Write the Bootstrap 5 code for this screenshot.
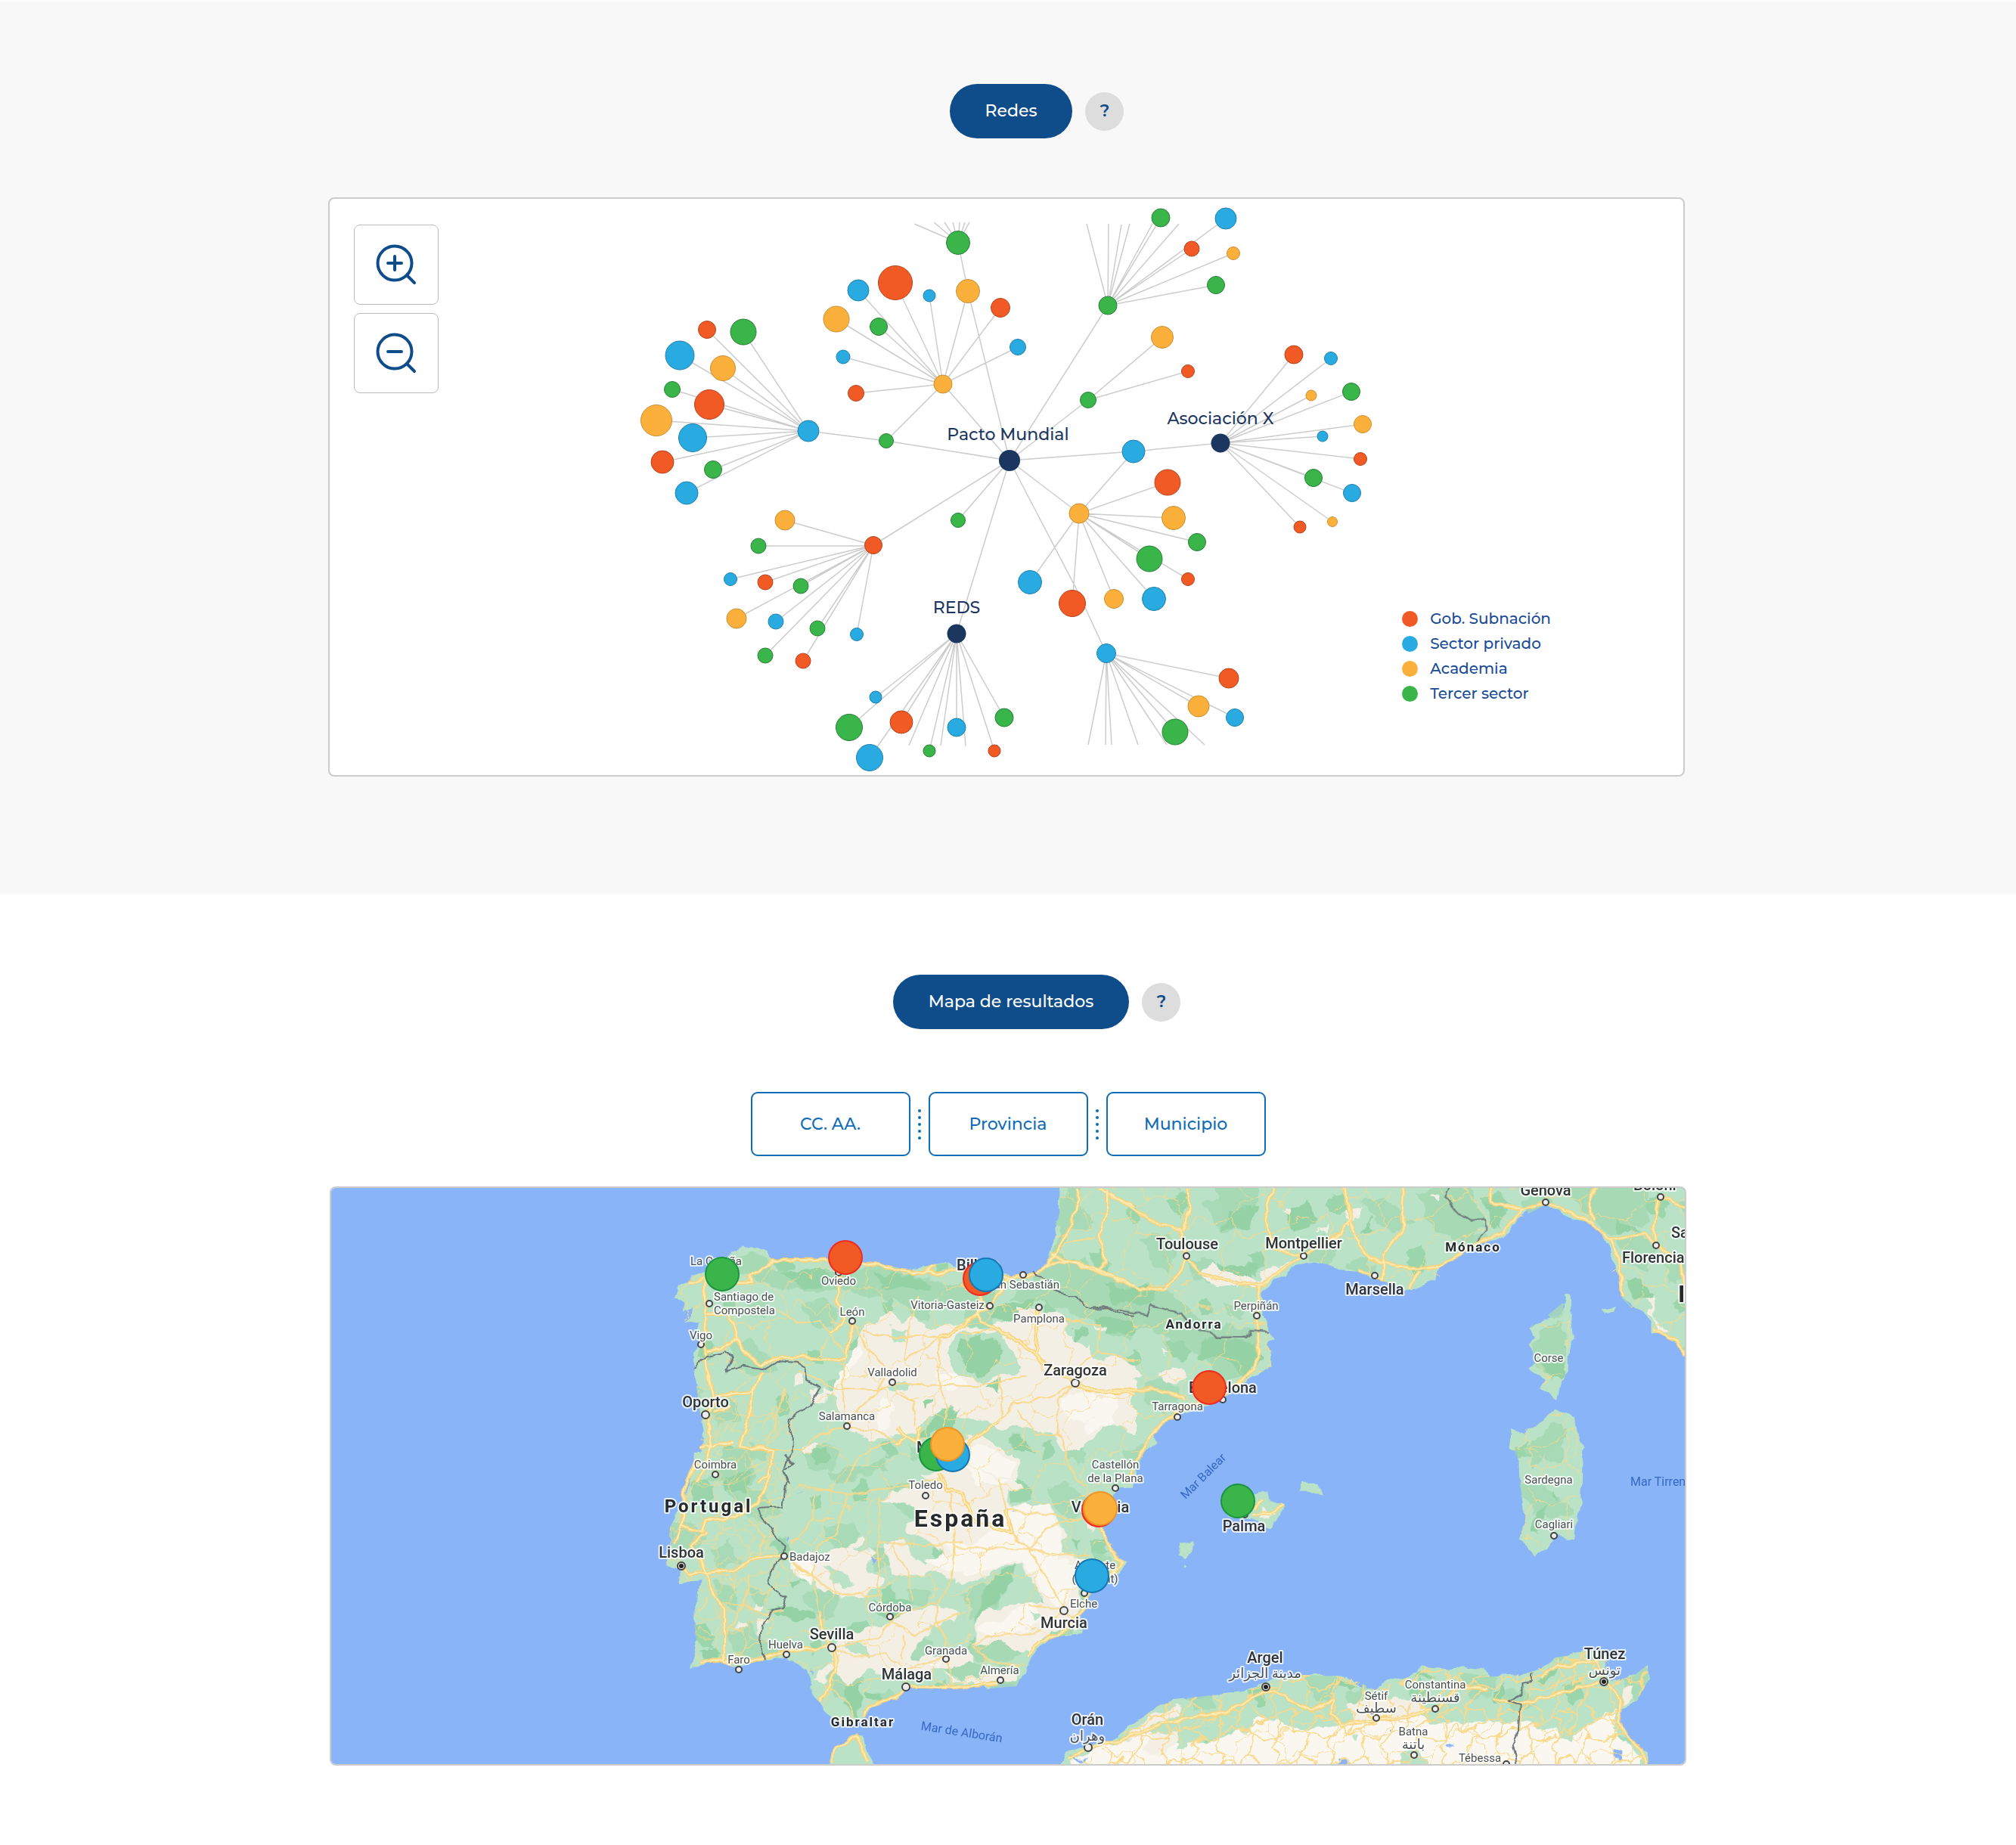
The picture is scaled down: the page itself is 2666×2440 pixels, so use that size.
<!DOCTYPE html>
<html lang="es">
<head>
<meta charset="utf-8">
<meta name="viewport" content="width=device-width, initial-scale=1">
<title>Redes y mapa de resultados</title>
<link href="https://cdn.jsdelivr.net/npm/bootstrap@5.3.0/dist/css/bootstrap.min.css" rel="stylesheet">
<style>
body{font-family:Montserrat,Inter,"Open Sans",sans-serif;font-size:22px;font-weight:500;background:#fff}
.zone-net{background:#f8f8f8;border-top:2px solid #fff;padding-top:109px;padding-bottom:155px}
.zone-map{padding-top:107px;padding-bottom:105px}
.panel-wrap{max-width:1794px;margin:0 auto}
.title-row{gap:17px;padding-left:76px}
.pill-title{background:#0f4c8a;color:#fff;font-size:22px;line-height:32px;padding:20px 47px;border:0;font-weight:500}
.pill-title:hover{background:#0c3f73;color:#fff}
.help-btn{width:51px;height:51px;background:#ddd;color:#0f4c8a;font-size:22px;line-height:26px;font-weight:600;padding:0;border:0}
.panel{border:2px solid #ccc;border-radius:8px;background:#fff;overflow:hidden}
.net-panel{margin-top:78px}
.map-panel{margin-top:40px}
.panel svg.canvas{display:block;width:100%;height:auto}
.zoom-tools{position:absolute;left:32px;top:34px;gap:11px}
.zoom-tools .btn{width:112px;height:106px;border:1px solid #bbb;border-radius:8px;background:#fff;padding:0}
.legend{position:absolute;right:175px;bottom:91px;margin:0;color:#1a4b96;font-size:20px;line-height:33px}
.legend li{display:flex;align-items:center;gap:16px}
.legend i{width:21px;height:21px;border-radius:50%}
.bg-gob{background:#f15a24}.bg-priv{background:#29abe2}.bg-acad{background:#fbb03b}.bg-ter{background:#39b54a}
.filters{gap:12px;margin-top:83px}
.filters .btn{width:211px;height:85px;border:2px solid #0f6cb6;border-radius:9px;color:#0f6cb6;background:#fff;font-size:22px;font-weight:500}
.dots{display:flex;flex-direction:column;gap:5px;width:0;align-items:center}
.dots span{width:4px;height:4px;border-radius:50%;background:#0f6cb6;flex:none}
.edges{fill:none;stroke:#ccc;stroke-width:1.5}
.red{fill:#f15a24;stroke:#b8421a}.blue{fill:#29abe2;stroke:#1e80ac}.orange{fill:#fbb03b;stroke:#cc8d2d}.green{fill:#39b54a;stroke:#277f34}
.navy{fill:#1b365f}
.hub-names{fill:#1b365f;font-size:22px;text-anchor:middle}
.land{fill:#b9e2c6}.sand{fill:#f4efe4}.pale{fill:#faf7f1}.wood{fill:#94d2a5}.mid{fill:#a6d9b4}
.road{fill:none;stroke-linejoin:round;vector-effect:non-scaling-stroke}
.r1{stroke:#f8d27a;stroke-width:5}.r2{stroke:#fdebb4;stroke-width:2}
.thin{fill:none;stroke:#f9d98c;stroke-width:2;stroke-linejoin:round}
.border-line{fill:none;stroke:#6c777b;stroke-width:2;vector-effect:non-scaling-stroke;stroke-linejoin:round}
.towns{fill:#eee;stroke:#444;stroke-width:2}
.lb{font-family:Roboto,"DejaVu Sans",sans-serif;text-anchor:middle;paint-order:stroke;stroke:#fff;stroke-opacity:.8;stroke-width:4px;stroke-linejoin:round;fill:#4a4f52;font-size:15px;font-weight:400}
.lb .s{text-anchor:start}.lb .e{text-anchor:end}
.lb .ar{font-size:18px}
.city{font-size:20px;font-weight:500;fill:#303436}
.nation{font-weight:700;fill:#26292b;font-size:17px;letter-spacing:2px}
.nation .xl{font-size:32px;letter-spacing:3px}.nation .l{font-size:24px;letter-spacing:3px}
.sea{fill:#3668c4;stroke:none;font-size:16px}
.pins{stroke-width:2}
.pins .red{stroke:#f22a22}.pins .blue{stroke:#1577b5}.pins .orange{stroke:#f29423}.pins .green{stroke:#1d9440}
</style>
</head>
<body>
<main>
<section class="zone-net">
 <div class="title-row d-flex justify-content-center align-items-center">
  <button type="button" class="btn rounded-pill pill-title">Redes</button>
  <button type="button" class="btn rounded-circle help-btn" aria-label="Ayuda sobre redes">?</button>
 </div>
 <div class="pe-1">
 <div class="panel-wrap">
 <div class="panel net-panel position-relative">
  <svg class="canvas" viewBox="436 263 1790 762" role="img" aria-label="Red de entidades">
   <path class="edges" d="M1069 570L935 436M1069 570L983 439M1069 570L899 470M1069 570L956 487M1069 570L889 515M1069 570L938 535M1069 570L868 556M1069 570L916 579M1069 570L876 611M1069 570L943 621M1069 570L908 652M1069 570L1172 583L1335 609M1247 508L1172 583M1247 508L1335 609M1247 508L1135 384M1247 508L1184 374M1247 508L1229 391M1247 508L1280 385M1247 508L1323 407M1247 508L1106 422M1247 508L1162 432M1247 508L1115 472M1247 508L1346 459M1247 508L1132 520M1335 609L1280 385L1267 321M1267 321L1209 296M1267 321L1235 294M1267 321L1249 294M1267 321L1260 294M1267 321L1269 294M1267 321L1276 294M1267 321L1282 294
   M1335 609L1465 404M1465 404L1437 296M1465 404L1466 296M1465 404L1483 297M1465 404L1494 296M1465 404L1524 296M1465 404L1535 288M1465 404L1559 296M1465 404L1621 289M1465 404L1576 329M1465 404L1631 335M1465 404L1608 377M1335 609L1439 529L1537 446M1439 529L1571 491M1335 609L1499 597L1614 586M1499 597L1427 679
   M1614 586L1711 469M1614 586L1760 474M1614 586L1734 523M1614 586L1787 518M1614 586L1802 561M1614 586L1749 577M1614 586L1799 607M1614 586L1737 632M1614 586L1788 652M1614 586L1719 697M1614 586L1762 690
   M1335 609L1427 679M1427 679L1544 638M1427 679L1552 685M1427 679L1583 717M1427 679L1520 739M1427 679L1571 766M1427 679L1362 770M1427 679L1418 798M1427 679L1473 792M1427 679L1526 792M1335 609L1424 780L1463 864
   M1463 864L1625 897M1463 864L1585 934M1463 864L1633 949M1463 864L1554 968M1463 864L1439 985M1463 864L1462 985M1463 864L1470 985M1463 864L1505 985M1463 864L1543 985M1463 864L1593 985
   M1335 609L1267 688M1335 609L1155 721M1335 609L1265 838M1155 721L1038 688M1155 722L1003 722M1155 721L966 766M1155 721L1012 770M1155 721L1059 775M1155 721L974 818M1155 721L1026 822M1155 721L1081 831M1155 721L1133 839M1155 721L1012 867M1155 721L1062 874
   M1265 838L1158 922M1265 838L1123 962M1265 838L1192 955M1265 838L1150 1002M1265 838L1202 986M1265 838L1229 993M1265 838L1244 986M1265 838L1265 962M1265 838L1277 987M1265 838L1315 993M1265 838L1328 949"/>
   <g class="red"><circle cx="935" cy="436" r="11.5"/><circle cx="938" cy="535" r="19.5"/><circle cx="876" cy="611" r="15"/><circle cx="1184" cy="374" r="22.5"/><circle cx="1323" cy="407" r="12.5"/><circle cx="1132" cy="520" r="10.5"/><circle cx="1576" cy="329" r="10"/><circle cx="1571" cy="491" r="8.5"/><circle cx="1711" cy="469" r="12"/><circle cx="1799" cy="607" r="8.5"/><circle cx="1719" cy="697" r="8"/><circle cx="1544" cy="638" r="17"/><circle cx="1571" cy="766" r="8.5"/><circle cx="1418" cy="798" r="17.5"/><circle cx="1625" cy="897" r="13"/><circle cx="1315" cy="993" r="8"/><circle cx="1155" cy="721" r="11.5"/><circle cx="1012" cy="770" r="10"/><circle cx="1062" cy="874" r="10"/><circle cx="1192" cy="955" r="15"/></g>
   <g class="blue"><circle cx="1069" cy="570" r="14"/><circle cx="899" cy="470" r="19"/><circle cx="916" cy="579" r="18.5"/><circle cx="908" cy="652" r="15"/><circle cx="1135" cy="384" r="14"/><circle cx="1229" cy="391" r="8"/><circle cx="1115" cy="472" r="9"/><circle cx="1346" cy="459" r="10.5"/><circle cx="1621" cy="289" r="14"/><circle cx="1499" cy="597" r="15"/><circle cx="1760" cy="474" r="8.5"/><circle cx="1749" cy="577" r="7"/><circle cx="1788" cy="652" r="11.5"/><circle cx="1362" cy="770" r="15.5"/><circle cx="1526" cy="792" r="15.5"/><circle cx="1463" cy="864" r="12.5"/><circle cx="1633" cy="949" r="11.5"/><circle cx="966" cy="766" r="8.5"/><circle cx="1026" cy="822" r="10"/><circle cx="1133" cy="839" r="8.5"/><circle cx="1158" cy="922" r="8"/><circle cx="1150" cy="1002" r="17.5"/><circle cx="1265" cy="962" r="12"/></g>
   <g class="orange"><circle cx="956" cy="487" r="16.5"/><circle cx="868" cy="556" r="20.5"/><circle cx="1247" cy="508" r="12"/><circle cx="1280" cy="385" r="15.5"/><circle cx="1106" cy="422" r="17"/><circle cx="1631" cy="335" r="8.5"/><circle cx="1537" cy="446" r="14.5"/><circle cx="1734" cy="523" r="7"/><circle cx="1802" cy="561" r="11.5"/><circle cx="1762" cy="690" r="6.5"/><circle cx="1427" cy="679" r="13"/><circle cx="1552" cy="685" r="15.5"/><circle cx="1473" cy="792" r="12.5"/><circle cx="1585" cy="934" r="14"/><circle cx="1038" cy="688" r="13"/><circle cx="974" cy="818" r="13"/></g>
   <g class="green"><circle cx="983" cy="439" r="17"/><circle cx="889" cy="515" r="10.5"/><circle cx="943" cy="621" r="11.5"/><circle cx="1172" cy="583" r="9.5"/><circle cx="1162" cy="432" r="11.5"/><circle cx="1267" cy="321" r="15.5"/><circle cx="1465" cy="404" r="12"/><circle cx="1535" cy="288" r="12"/><circle cx="1608" cy="377" r="11.5"/><circle cx="1439" cy="529" r="10.5"/><circle cx="1787" cy="518" r="11.5"/><circle cx="1737" cy="632" r="11.5"/><circle cx="1583" cy="717" r="11.5"/><circle cx="1520" cy="739" r="17"/><circle cx="1554" cy="968" r="17"/><circle cx="1328" cy="949" r="12"/><circle cx="1003" cy="722" r="10"/><circle cx="1059" cy="775" r="10"/><circle cx="1081" cy="831" r="10"/><circle cx="1012" cy="867" r="10"/><circle cx="1267" cy="688" r="9.5"/><circle cx="1123" cy="962" r="17.5"/><circle cx="1229" cy="993" r="8"/></g>
   <g class="navy"><circle cx="1335" cy="609" r="14"/><circle cx="1614" cy="586" r="12.5"/><circle cx="1265" cy="838" r="12.5"/></g>
   <g class="hub-names"><text x="1333" y="582">Pacto Mundial</text><text x="1614" y="561">Asociación X</text><text x="1265" y="811">REDS</text></g>
  </svg>
  <div class="zoom-tools d-flex flex-column">
   <button type="button" class="btn" aria-label="Acercar"><svg width="56" height="56" viewBox="0 0 56 56" fill="none" stroke="#0f4c8a" stroke-width="4" stroke-linecap="round"><circle cx="26" cy="26" r="22.500"/><path d="M42 42L52 52M17 26H35M26 17V35"/></svg></button>
   <button type="button" class="btn" aria-label="Alejar"><svg width="56" height="56" viewBox="0 0 56 56" fill="none" stroke="#0f4c8a" stroke-width="4" stroke-linecap="round"><circle cx="26" cy="26" r="22.500"/><path d="M42 42L52 52M17 26H35"/></svg></button>
  </div>
  <ul class="legend list-unstyled">
   <li><i class="bg-gob"></i>Gob. Subnación</li><li><i class="bg-priv"></i>Sector privado</li><li><i class="bg-acad"></i>Academia</li><li><i class="bg-ter"></i>Tercer sector</li>
  </ul>
 </div>
 </div>
 </div>
</section>

<section class="zone-map">
 <div class="title-row d-flex justify-content-center align-items-center">
  <button type="button" class="btn rounded-pill pill-title">Mapa de resultados</button>
  <button type="button" class="btn rounded-circle help-btn" aria-label="Ayuda sobre el mapa">?</button>
 </div>
 <div class="filters d-flex justify-content-center align-items-center">
  <button type="button" class="btn">CC. AA.</button>
  <div class="dots"><span></span><span></span><span></span><span></span><span></span></div>
  <button type="button" class="btn">Provincia</button>
  <div class="dots"><span></span><span></span><span></span><span></span><span></span></div>
  <button type="button" class="btn">Municipio</button>
 </div>
 <div class="panel-wrap">
 <div class="panel map-panel">
  <svg class="canvas" viewBox="438 1571 1790 762" role="img" aria-label="Mapa de resultados">
   <defs>
    <filter id="rough" filterUnits="userSpaceOnUse" x="840" y="1540" width="1420" height="820" color-interpolation-filters="sRGB">
     <feTurbulence type="fractalNoise" baseFrequency=".045" numOctaves="3" seed="4" result="n"/>
     <feDisplacementMap in="SourceGraphic" in2="n" scale="20" xChannelSelector="R" yChannelSelector="G"/>
    </filter>
    <filter id="roughSoft" filterUnits="userSpaceOnUse" x="840" y="1540" width="1420" height="820" color-interpolation-filters="sRGB">
     <feTurbulence type="fractalNoise" baseFrequency=".06" numOctaves="2" seed="9" result="n"/>
     <feDisplacementMap in="SourceGraphic" in2="n" scale="9" xChannelSelector="R" yChannelSelector="G"/>
    </filter>
    <g id="coast">
     <g transform="translate(860 1560) scale(.40816 .33333)">
      <path d="M1328 -40L1325 130L1305 250L1285 335L1240 375L1190 385L1150 375L1100 365L1050 355L1000 348L960 330L900 345L840 358L760 345L690 325L630 312L560 315L480 318L395 315L375 285L350 270L320 275L300 262L250 300L235 330L180 365L135 380L125 410L95 415L78 470L110 490L105 520L140 510L110 570L160 560L150 620L165 655L140 690L140 750L155 850L165 930L175 1000L165 1080L150 1150L140 1220H1540L1568 1120V-40Z"/>
     </g>
     <g transform="translate(1380 1560) scale(.54847 .33333)">
      <path d="M100 -40H1600V735L1545 700L1530 650L1480 605L1465 612L1465 560L1440 520L1395 470L1395 400L1370 320L1365 260L1340 205L1320 175L1270 150L1212 100L1170 120L1140 160L1125 210L1090 240L1050 250L1000 300L950 350L945 400L900 430L870 435L830 405L790 395L760 365L710 360L700 345L650 325L600 350L585 380L560 395L525 440L530 540L555 640L540 650L550 740L520 770L480 810L430 870L380 905L330 930L280 975L265 1010L275 1040L240 1080L215 1220H100Z"/>
      <path d="M1257 458L1270 460L1272 540L1280 620L1265 700L1265 760L1250 800L1240 870L1195 825L1205 800L1175 750L1190 720L1168 650L1185 630L1175 590L1200 560L1250 530ZM1345 515L1380 505L1375 525L1350 528ZM1235 908L1280 950L1285 1000L1305 1060L1295 1140L1290 1220H1148L1145 1080L1122 1070L1128 990L1160 1010L1210 950Z"/>
     </g>
     <g transform="translate(860 1930) scale(.40816 .33333)">
      <path d="M145 -30L130 100L95 200L65 270L75 300L50 420L100 440L90 490L160 480L155 560L140 610L150 650L150 740L130 828L200 800L240 810L290 830L340 800L440 785L500 830L525 880L520 910L545 960L570 1010L620 1050L650 1065L690 1020L710 985L760 950L800 945L830 905L900 895L980 905L1060 890L1095 910L1135 880L1185 900L1215 850L1235 780L1300 705L1400 690L1390 640L1410 560L1440 500L1520 450L1545 410L1500 370L1470 290L1450 240L1480 170L1520 110L1540 50L1560 -30ZM570 1260L595 1140L630 1115L660 1095L690 1100L700 1160L750 1260Z"/>
     </g>
     <g transform="translate(1380 1930) scale(.54847 .33333)">
      <path d="M440 220L460 170L520 130L540 130L545 165L578 180L570 230L545 275L510 240L480 235ZM622 95L660 95L677 150L640 125L622 125ZM322 380L335 335L362 328L358 360L340 390ZM338 420L347 430L340 440ZM1300 -30L1297 150L1285 240L1280 320L1235 300L1215 350L1185 383L1150 320L1160 250L1150 100L1146 -30Z"/>
      <path d="M30 1260L55 1160L90 1140L170 1115L205 1060L250 1010L310 955L400 940L480 920L540 880L620 855L730 860L770 910L800 915L830 880L900 850L910 820L940 825L980 840L1010 820L1060 835L1080 860L1170 850L1210 820L1240 785L1310 755L1360 775L1355 830L1370 880L1420 860L1455 820L1460 870L1430 960L1395 990L1385 1050L1410 1110L1455 1160L1452 1260Z"/>
     </g>
    </g>
    <clipPath id="landClip">
     <path d="M1402 1540L1401 1603L1393 1643L1384 1672L1366 1685L1346 1688L1309 1682L1268 1676L1252 1670L1203 1679L1142 1668L1021 1665L1003 1650L982 1647L962 1660L915 1687L892 1717L905 1727L905 1750L925 1747L927 1778L917 1810L927 1870L927 1920L913 1963L899 1997L886 2020L880 2070L901 2077L897 2093L925 2090L917 2133L921 2177L913 2206L942 2197L978 2207L999 2197L1040 2192L1064 2207L1082 2250L1113 2280L1125 2285L1150 2258L1186 2245L1199 2232L1260 2232L1307 2233L1344 2230L1364 2190L1391 2165L1431 2160L1431 2130L1448 2097L1490 2067L1460 2027L1452 2010L1475 1970L1498 1960L1512 1920L1531 1900L1534 1885L1561 1870L1616 1850L1682 1807L1681 1773L1671 1740L1668 1707L1709 1677L1737 1668L1797 1682L1857 1705L1898 1693L1956 1643L2005 1613L2045 1593L2104 1618L2145 1717L2185 1757L2250 1800V1540ZM1399 2350L1473 2302L1517 2267L1550 2248L1643 2237L1720 2215L1780 2217L1819 2235L1874 2213L1879 2203L1917 2210L1972 2217L2022 2213L2060 2192L2098 2182L2126 2188L2131 2223L2159 2217L2178 2203L2181 2220L2164 2250L2145 2260L2140 2280L2178 2317V2350ZM2058 1864L2084 1880L2095 1915L2088 1955L2080 2030L2050 2035L2030 2050L2012 2030L2010 1955L2000 1910L2010 1895ZM2070 1720L2080 1760L2060 1845L2036 1830L2025 1775L2040 1745Z"/>
    </clipPath>
    <pattern id="localRoads" width="132" height="118" patternUnits="userSpaceOnUse">
     <path class="thin" d="M0 30L18 36L30 24L52 30L66 52L90 46L108 58L132 30M30 24L36 0M36 118L48 98L44 76L66 52M44 76L20 82L0 72M90 46L96 20L88 0M88 118L96 96L120 90L132 72M108 58L120 90M48 98L70 104L96 96" style="stroke-width:1"/>
    </pattern>
    <pattern id="denseRoads" width="74" height="66" patternUnits="userSpaceOnUse">
     <path class="thin" d="M0 16L12 22L20 10L34 18L42 32L58 26L74 16M20 10L26 0M26 66L30 52L22 42L42 32M22 42L8 48L0 40M58 26L62 10L54 0M54 66L62 52L74 40M58 26L66 36L62 52M30 52L46 56L62 52M12 22L8 48"/>
    </pattern>
    <pattern id="woods" width="210" height="190" patternUnits="userSpaceOnUse">
     <path class="mid" d="M10 20L40 8L62 24L52 48L24 44ZM120 70L150 60L172 78L190 100L160 108L136 96ZM40 120L72 110L90 130L76 160L52 150ZM150 10L180 16L174 34L154 30ZM100 150L128 140L140 168L110 176Z"/>
     <path class="wood" d="M70 66L92 56L106 72L96 90L80 84ZM180 140L200 130L206 156L190 166ZM20 80L34 76L38 92L26 98ZM116 12L128 6L134 24L120 30Z"/>
    </pattern>
    <g id="mainRoads">
    <g transform="translate(860 1560) scale(.40816 .33333)">
     <path class="road" d="M120 415L180 385L175 440L178 510L175 660L180 740L195 820L210 870L185 930L195 1060L180 1130L150 1200M185 530L250 530L270 580L280 630L230 670L180 680M280 630L300 680L360 740L400 710L490 705L560 715L635 710L640 640L655 570M275 410L330 410L325 380L370 350L395 320L560 318L690 328L760 345L880 372L920 345L890 360L930 375L1000 355L1060 365L1140 390L1250 375L1290 330L1320 280L1370 160L1390 80L1380 30M612 370L605 480L630 560L580 605M800 985L830 1020L790 1050M880 985L860 1040L830 1020M1070 460L1065 560L1130 600L1200 640L1270 720L1340 780L1380 810L1430 840L1568 850M1255 510L1250 690M940 630L1060 540L1140 440L1160 390M270 1050L160 1060M360 770L330 840L320 940L290 1060L400 1075L380 1180L350 1200M200 860L330 845M205 920L260 900M1300 300L1340 320L1440 350L1568 420M1480 40L1480 120L1455 220L1475 330L1440 360M1455 40L1568 110M1020 1060L1060 1020L1140 950"/>
    </g>
    <g transform="translate(1380 1560) scale(.54847 .33333)">
     <path class="road" d="M140 40L210 110L280 180L330 200L345 300L330 370L290 430L230 435L140 370L60 325L0 340M345 300L380 370L440 400L520 420L600 330L640 290L720 210L740 150L725 30M520 420L515 540L520 700L490 780L430 860L340 900L270 990L230 1100L200 1200M350 30L350 130L335 200M555 30L530 160L560 280L625 300M740 160L760 260L800 320L890 350L960 340L1050 250L1110 210L1150 120L1211 90L1270 130L1320 170L1370 240L1390 330L1395 460M1470 590L1530 640L1545 700M870 30L865 200L820 300L820 400L760 360M1075 30L1080 90L1150 120M1330 30L1315 90L1325 160M1487 70L1470 200L1475 260M1370 240L1450 215L1478 260L1540 330L1548 470M1487 70L1548 110M75 806L110 835L200 840L260 825L340 870M910 360L880 430"/>
    </g>
    <g transform="translate(860 1930) scale(.40816 .33333)">
     <path class="road" d="M150 0L110 130L100 260L165 290L180 240L280 230L350 170L390 60M100 260L80 330M180 290L130 340L165 400L180 440L200 520L240 600L240 740L235 800L160 800M100 425L130 455L270 440L340 390L435 380M550 600L560 700L588 745L600 800L580 900L550 960M235 805L330 800L440 760L588 745M830 900L790 945L700 980L690 1020M940 50L960 120L1010 130L1050 240L1170 290L1150 200M1450 240L1480 340L1530 410L1500 450L1420 510L1400 600L1330 690L1270 720L1220 780M1130 890L980 905L830 900M590 1200L600 1140L670 1100L700 1200"/>
    </g>
    <g transform="translate(1380 1930) scale(.54847 .33333)">
     <path class="road" d="M60 1190L110 1140L180 1120L300 1040L450 1000L530 920L580 930L600 970L650 1000L700 950L690 1010L720 1050L850 1030L945 990L1000 900L1070 910M1352 880L1395 950L1385 1050L1440 1150L1450 1210M1352 880L1240 930L1150 970L1080 950M1352 880L1330 800L1240 820L1200 860M500 220L550 215L575 180M505 200L528 160"/>
    </g>
    </g>
   </defs>
   <rect x="436" y="1569" width="1794" height="768" fill="#8ab4f8"/>
   <use href="#coast" class="land" filter="url(#roughSoft)"/>
   <g clip-path="url(#landClip)"><rect x="840" y="1540" width="1420" height="820" fill="url(#woods)" opacity=".8" filter="url(#rough)"/></g>
   <g filter="url(#rough)">
   <g transform="translate(860 1560) scale(.40816 .33333)">
    <path class="mid" d="M260 300L350 290L400 350L570 370L700 350L900 390L1120 450L1100 530L900 500L760 470L600 440L420 430L300 380ZM1300 350L1350 0L1400 0L1380 160L1330 290L1568 420V650L1440 560L1250 480L1150 480ZM240 1060L330 1080L340 1200H180Z"/>
    <path class="wood" d="M420 360L560 350L600 400L480 430ZM720 370L880 390L900 440L760 430ZM1120 500L1260 470L1220 560L1100 550ZM1400 480L1568 540V620L1470 590Z"/>
    <path class="sand" d="M690 590L740 540L780 525L810 570L850 545L900 590L1000 570L1080 600L1150 560L1230 520L1310 515L1360 580L1340 640L1420 650L1440 720L1568 800V1000L1490 960L1440 1010L1400 1080L1330 1060L1250 980L1130 990L1100 950L1010 940L960 900L860 990L790 1030L700 1040L650 990L600 900L530 880L520 830L590 850L630 760L670 660ZM980 1050L1070 1010L1130 1060L1190 1120L1200 1200H900L870 1160L960 1130ZM470 780L490 770L495 810L470 815ZM490 1060L550 1050L545 1080L500 1090Z"/>
    <path class="pale" d="M670 660L690 690L650 760L620 820L600 840L620 760ZM930 770L1010 750L1030 820L950 830ZM1340 850L1430 830L1520 860L1500 960L1420 1000L1340 960ZM740 860L790 900L780 980L740 1000ZM1040 1060L1110 1070L1180 1130L1170 1200H1000Z"/>
    <path class="land" d="M980 620L1100 610L1180 680L1200 760L1080 800L1000 770L960 690ZM1330 660L1390 600L1420 650L1370 690ZM760 810L840 805L830 840L770 830ZM1190 640L1260 700L1330 780L1290 800L1220 740ZM780 580L830 590L830 640L790 640ZM560 850L600 870L600 910L560 890Z"/>
    <path class="wood" d="M1000 640L1060 620L1150 670L1140 730L1060 780L1000 700ZM1380 590L1420 610L1380 650ZM1100 810L1130 795L1130 840ZM880 890L910 875L900 905ZM1160 1030L1200 1010L1240 1080L1180 1090ZM860 1020L960 910L1000 920L960 1000ZM530 1090L570 1070L590 1110L560 1130Z"/>
   </g>
   <g transform="translate(1380 1560) scale(.54847 .33333)">
    <path class="mid" d="M420 0H520L500 200L430 210ZM900 60L1020 0L1060 160L1040 240L940 200ZM1230 0H1460L1450 180L1370 220L1300 130ZM60 400L300 440L380 560L510 600L525 745L440 800L380 700L240 570L60 540Z"/>
    <path class="wood" d="M570 140L640 80L660 170L600 210ZM450 120L520 110L500 200L430 200ZM410 330L520 340L500 390L430 380ZM390 620L500 640L530 700L490 790L430 700L370 720ZM780 150L790 180L800 200L770 210ZM1380 160L1450 210L1380 220ZM1410 390L1440 400L1470 460L1420 470ZM1200 720L1260 660L1255 790L1220 790ZM150 420L280 440L240 500L170 490ZM1070 100L1110 110L1100 190L1075 190Z"/>
    <path class="sand" d="M730 120L770 110L740 180ZM400 330L460 380L520 390L580 330L600 325L530 420L410 430L385 370ZM580 110L595 120L580 150L570 140ZM660 190L690 185L690 210ZM1445 470L1470 460L1470 550L1500 600L1480 590ZM-60 500L60 590L100 700L200 720L240 780L150 820L120 950L60 1060L-60 950ZM270 760L330 740L340 800L300 810ZM120 570L150 590L140 600ZM280 670L300 680L295 700ZM930 60L950 55L945 85Z"/>
    <path class="pale" d="M40 860L120 840L150 900L100 980L50 940Z"/>
    <path class="mid" d="M1195 600L1245 560L1260 690L1205 710ZM1165 1060L1230 970L1270 990L1240 1080L1210 1080L1180 1150Z"/>
    <path class="thin" d="M1145 1010L1180 1060L1215 1060L1275 985M1180 1060L1170 1120L1220 1200M1275 985L1290 1080L1250 1150"/>
   </g>
   <g transform="translate(860 1930) scale(.40816 .33333)">
    <path class="sand" d="M960 60L1010 20L1180 80L1210 110L1150 130L1180 180L1300 200L1350 300L1330 360L1390 410L1380 680L1300 680L1230 760L1040 740L1060 650L1090 600L1280 560L1240 500L1200 410L1110 440L1060 490L990 480L880 430L960 370L880 320L830 300L820 250L890 230L850 180L740 160L780 130L860 110ZM540 370L620 350L690 320L730 370L700 420L760 480L700 550L600 540L540 500L450 440L460 410ZM760 330L830 330L860 400L910 430L880 470L780 450ZM560 740L720 660L920 570L1000 600L960 680L880 700L860 790L1000 750L1040 750L1050 830L1190 850L1185 880L1090 890L980 880L960 830L900 840L830 870L700 830L640 900L600 830L560 890L530 870L590 800ZM345 570L370 575L360 600L340 590ZM340 640L380 620L350 690ZM290 640L305 680L280 670ZM1400 240L1430 230L1440 290Z"/>
    <path class="pale" d="M1180 190L1290 180L1340 310L1320 400L1380 420L1360 560L1320 610L1280 540L1200 400L1080 440L990 460L890 400L1000 370L930 330L1060 330ZM1070 670L1240 570L1270 640L1180 700L1060 690ZM450 410L530 400L520 500ZM880 820L940 800L950 830ZM1000 10L1100 60L1180 90L1060 90Z"/>
    <path class="land" d="M560 430L640 440L660 500L590 490ZM910 670L960 640L1040 680L960 740L890 720ZM640 740L690 730L700 780L640 760ZM860 20L960 10L940 50L870 60ZM1230 610L1270 620L1250 640ZM650 350L740 330L700 370Z"/>
    <path class="wood" d="M1120 460L1180 420L1170 490L1100 590L1060 640L1080 540ZM630 890L680 880L690 960L660 1030L640 980ZM700 930L750 920L740 950L700 960ZM1370 310L1390 320L1380 370ZM380 600L480 580L530 620L480 640ZM450 490L510 480L460 510ZM720 550L850 560L800 630L740 610ZM155 770L200 740L230 780L170 790ZM240 60L330 40L320 120L250 130Z"/>
    <path class="mid" d="M1040 740L1130 720L1190 760L1160 800L1050 790ZM960 830L1070 800L1110 840L1000 880ZM580 60L760 0L780 40L620 90ZM200 480L280 500L270 600L220 560ZM1430 360L1500 400L1480 440Z"/>
    <path d="M715 380L740 400L725 420ZM445 310L458 295L450 330ZM480 135L495 120L490 130ZM1175 210L1192 205L1190 215ZM530 820L532 850L525 835Z" fill="#8ab4f8"/>
   </g>
   <g transform="translate(1380 1930) scale(.54847 .33333)">
    <path class="pale" d="M60 1240L80 1170L170 1125L260 1080L330 1130L450 1100L520 1030L640 1070L720 1050L900 1010L960 1060L1060 1040L1170 1040L1270 1110L1330 1040L1380 1000L1375 1060L1400 1120L1440 1170V1240Z"/>
    <path class="sand" d="M195 1110L215 1070L260 1020L320 970L340 980L330 1020L270 1060L230 1100ZM1400 920L1425 900L1420 940L1395 970ZM260 1090L330 1080L300 1170L240 1150ZM730 970L850 940L930 1000L850 1030L740 1030ZM530 190L560 220L545 240L520 235Z"/>
    <path class="land" d="M330 1080L360 1070L350 1140L320 1150ZM360 1080L510 1040L490 1080L370 1110ZM860 1160L900 1140L930 1213H860ZM740 1090L760 1100L755 1120Z"/>
    <path class="wood" d="M890 870L910 845L950 860L900 870ZM1080 930L1120 900L1110 960L1080 970ZM700 880L760 890L740 920L700 900ZM1180 230L1210 180L1200 280L1180 290ZM1225 110L1240 160L1220 140ZM1205 840L1240 810L1210 890L1190 880Z"/>
    <path d="M700 1223L710 1190L740 1195L760 1223ZM65 1190L110 1165L100 1185L70 1195ZM1370 1165L1390 1155L1390 1200L1375 1200ZM965 1120L985 1125L970 1135ZM830 1080L835 1095L840 1080Z" fill="#8ab4f8"/>
   </g>
   </g>
   <g clip-path="url(#landClip)">
    <rect x="840" y="1540" width="1420" height="820" fill="url(#localRoads)" filter="url(#rough)"/>
    <rect x="1390" y="2170" width="800" height="180" fill="url(#denseRoads)" filter="url(#rough)"/>
    <path d="M860 1815L1050 1870L1030 2000L1035 2060L1005 2200H860Z" fill="url(#denseRoads)" opacity=".45" filter="url(#rough)"/>
   </g>
   <g filter="url(#roughSoft)">
   <g transform="translate(860 1560) scale(.40816 .33333)"><path class="thin" vector-effect="non-scaling-stroke" d="M690 600L800 630L880 615L940 630L820 720M870 460L840 580L820 720M660 570L700 670L760 740L740 840L680 900L640 970M940 630L935 800L960 900L950 980M590 830L740 835L790 810L1050 820L1220 780M635 710L620 830L637 970M790 810L800 850L850 880L860 980M640 985L740 1000L790 1040L680 1090L630 1200M637 980L550 1010L490 1070L400 1075M1130 770L1140 950L1180 890L1300 860L1380 810M1380 810L1320 870L1320 1000L1360 1150L1400 1200M1000 610L1130 600M1290 540L1380 565L1460 580L1450 680L1390 740L1380 810M1450 680L1568 720M1190 920L1250 1010L1320 1010M480 760L560 800L590 830M410 520L480 570L550 560L600 640L635 700M1300 300L1350 250L1440 230M435 830L400 980L380 1030"/></g>
   <g transform="translate(860 1930) scale(.40816 .33333)"><path class="thin" vector-effect="non-scaling-stroke" d="M480 100L640 140L800 110L940 80M640 140L600 300L540 340L520 460L545 600M530 140L525 240L460 330M530 240L600 240M435 380L520 460M588 745L740 710L777 640L850 590L930 570L970 500L990 320L970 130M777 640L740 540L740 300L740 150M460 410L600 530L740 540M850 560L840 460L780 340M588 745L660 780L760 770L820 830L830 900M777 640L860 700L930 650L1020 600M820 700L820 800M1170 290L1225 355L1280 460L1340 590M1225 355L990 350M1225 355L1300 260L1420 230M1225 355L1340 385L1430 385M930 570L930 640L960 720L957 793M1340 600L1240 690L1100 700L1040 740L1100 800L1200 820M830 830L950 790M957 793L980 905M1225 575L1340 600M1130 80L1150 200L1290 220L1390 240M740 330L900 340L1010 330M320 240L370 300L350 380M320 460L320 500L290 600L240 700M220 570L300 580L370 615L430 600M190 550L150 610M560 890L650 970L655 1050"/></g>
   <use href="#mainRoads" class="r1"/><use href="#mainRoads" class="r2"/>
   <g transform="translate(860 1560) scale(.40816 .33333)"><path class="border-line" d="M140 750L180 700L245 685L265 710L250 760L300 740L370 755L410 720L470 725L500 740L505 795L555 825L520 895L470 930L445 960L460 1010L460 1080L430 1160L440 1200M1240 360L1250 385L1290 400L1310 440L1380 470L1430 510L1470 505L1520 530L1568 540"/></g>
   <g transform="translate(1380 1560) scale(.54847 .33333)"><path class="border-line" d="M120 515L160 510L250 540L260 500L330 530L360 590L400 600L420 625L490 625L500 600L545 605M985 0L970 70L990 120L1030 160L1065 160L1065 200L1045 245"/></g>
   <g transform="translate(860 1930) scale(.40816 .33333)"><path class="border-line" d="M440 90L430 190L347 195L365 230L390 270L410 320L438 350L430 385L390 440L385 490L420 550L440 550L430 590L395 600L360 660L355 720L370 795M440 90L450 100L430 50L465 20L440 -20"/></g>
   <g transform="translate(1380 1930) scale(.54847 .33333)"><path class="border-line" d="M1177 850L1175 885L1155 890L1155 930L1120 960L1148 975L1145 1080L1130 1130L1145 1240"/></g>
   </g>
   <g class="towns"><circle cx="938" cy="1724" r="4"/><circle cx="1109" cy="1683" r="4"/><circle cx="1127" cy="1747" r="4"/><circle cx="927" cy="1778" r="4"/><circle cx="1180" cy="1828" r="4"/><circle cx="1422" cy="1829" r="5"/><circle cx="933" cy="1871" r="5"/><circle cx="1120" cy="1886" r="4"/><circle cx="946" cy="1950" r="4"/><circle cx="1353" cy="1686" r="4"/><circle cx="1374" cy="1729" r="4"/><circle cx="1309" cy="1727" r="4"/><circle cx="1224" cy="1978" r="4"/><circle cx="1037" cy="2058" r="4"/><circle cx="1177" cy="2138" r="4"/><circle cx="1100" cy="2179" r="5"/><circle cx="1040" cy="2188" r="4"/><circle cx="977" cy="2208" r="4"/><circle cx="1198" cy="2231" r="5"/><circle cx="1251" cy="2194" r="4"/><circle cx="1323" cy="2222" r="4"/><circle cx="1407" cy="2130" r="5"/><circle cx="1434" cy="2107" r="4"/><circle cx="1475" cy="1968" r="4"/><circle cx="1439" cy="2311" r="5"/><circle cx="1569" cy="1661" r="4"/><circle cx="1724" cy="1661" r="4"/><circle cx="1818" cy="1687" r="4"/><circle cx="2044" cy="1590" r="4"/><circle cx="2196" cy="1583" r="4"/><circle cx="2190" cy="1647" r="4"/><circle cx="1662" cy="1740" r="4"/><circle cx="1617" cy="1851" r="4"/><circle cx="1557" cy="1874" r="4"/><circle cx="1646" cy="2003" r="4"/><circle cx="2055" cy="2031" r="4"/><circle cx="1820" cy="2272" r="4"/><circle cx="1898" cy="2260" r="4"/><circle cx="1870" cy="2321" r="4"/><circle cx="1992" cy="2333" r="4"/><circle cx="901" cy="2071" r="5"/><circle cx="1674" cy="2231" r="5"/><circle cx="2121" cy="2224" r="5"/></g>
   <g fill="#222"><circle cx="901" cy="2071" r="3"/><circle cx="1674" cy="2231" r="3"/><circle cx="2121" cy="2224" r="3"/></g>
   <g class="lb"><text x="947" y="1673">La Coruña</text><text x="1109" y="1699">Oviedo</text><text x="1401" y="1704" class="e">San Sebastián</text><text x="1253" y="1731">Vitoria-Gasteiz</text><text x="944" y="1720" class="s">Santiago de</text><text x="944" y="1738" class="s">Compostela</text><text x="1127" y="1740">León</text><text x="1374" y="1749">Pamplona</text><text x="927" y="1771">Vigo</text><text x="1180" y="1820">Valladolid</text><text x="1120" y="1878">Salamanca</text><text x="946" y="1942">Coimbra</text><text x="1475" y="1942">Castellón</text><text x="1475" y="1960">de la Plana</text><text x="1224" y="1969">Toledo</text><text x="1044" y="2064" class="s">Badajoz</text><text x="1448" y="2075">Alicante</text><text x="1448" y="2093">(Alacant)</text><text x="1433" y="2126">Elche</text><text x="1177" y="2131">Córdoba</text><text x="1039" y="2180">Huelva</text><text x="1251" y="2188">Granada</text><text x="977" y="2200">Faro</text><text x="1322" y="2214">Almería</text><text x="1661" y="1732">Perpiñán</text><text x="2048" y="1801">Corse</text><text x="1557" y="1865">Tarragona</text><text x="2048" y="1962">Sardegna</text><text x="2055" y="2021">Cagliari</text><text x="1820" y="2248">Sétif</text><text x="1820" y="2265" class="ar">سطيف</text><text x="1898" y="2233">Constantina</text><text x="1898" y="2251" class="ar">قسنطينة</text><text x="1869" y="2295">Batna</text><text x="1869" y="2313" class="ar">باتنة</text><text x="1957" y="2330">Tébessa</text><text x="1438" y="2302" class="ar">وهران</text><text x="1673" y="2219" class="ar">مدينة الجزائر</text><text x="2122" y="2215" class="ar">تونس</text></g>
   <g class="lb city"><text x="1265" y="1680" class="s">Bilbao</text><text x="1422" y="1819">Zaragoza</text><text x="933" y="1861">Oporto</text><text x="1212" y="1921" class="s">Madrid</text><text x="901" y="2060">Lisboa</text><text x="1455" y="2000">Valencia</text><text x="1407" y="2153">Murcia</text><text x="1100" y="2168">Sevilla</text><text x="1199" y="2221">Málaga</text><text x="1438" y="2281">Orán</text><text x="1570" y="1652">Toulouse</text><text x="1724" y="1651">Montpellier</text><text x="1818" y="1712">Marsella</text><text x="2044" y="1581">Génova</text><text x="2160" y="1574" class="s">Boloni</text><text x="2145" y="1670" class="s">Florencia</text><text x="2210" y="1637" class="s">Sa</text><text x="1617" y="1842">Barcelona</text><text x="1645" y="2025">Palma</text><text x="1673" y="2199">Argel</text><text x="2122" y="2194">Túnez</text></g>
   <g class="lb nation"><text x="937" y="2000" class="l">Portugal</text><text x="1270" y="2019" class="xl">España</text><text x="2219" y="1722" class="xl s">I</text><text x="1141" y="2283">Gibraltar</text><text x="1579" y="1757">Andorra</text><text x="1948" y="1655">Mónaco</text></g>
   <g class="lb sea"><text transform="translate(1271 2296) rotate(9)">Mar de Alborán</text><text transform="translate(1595 1956) rotate(-45)">Mar Balear</text><text x="2156" y="1965" class="s">Mar Tirren</text></g>
   <g class="pins"><circle class="green" cx="955" cy="1685" r="22"/><circle class="red" cx="1118" cy="1663" r="22"/><circle class="red" cx="1296" cy="1691" r="22"/><circle class="blue" cx="1304" cy="1686" r="22"/><circle class="green" cx="1238" cy="1923" r="22"/><circle class="blue" cx="1260" cy="1924" r="22"/><circle class="orange" cx="1253" cy="1910" r="22"/><circle class="red" cx="1599" cy="1835" r="22"/><circle class="red" cx="1453" cy="1997" r="22"/><circle class="orange" cx="1455" cy="1995" r="22"/><circle class="blue" cx="1444" cy="2084" r="22"/><circle class="green" cx="1637" cy="1985" r="22"/></g>
  </svg>
 </div>
 </div>
</section>
</main>
<script src="https://cdn.jsdelivr.net/npm/bootstrap@5.3.0/dist/js/bootstrap.bundle.min.js"></script>
</body>
</html>
